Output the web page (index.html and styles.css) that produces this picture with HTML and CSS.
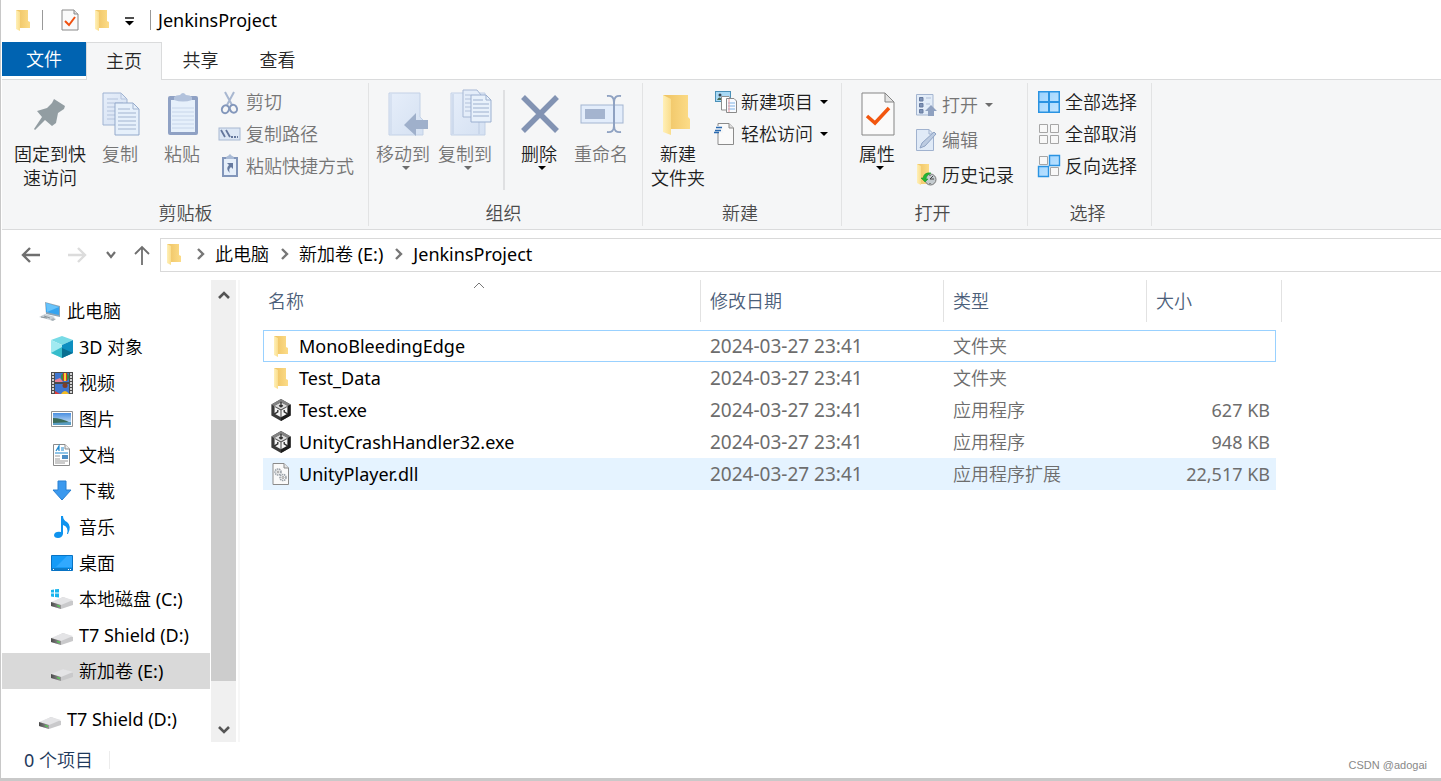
FILE: index.html
```html
<!DOCTYPE html>
<html lang="zh-CN">
<head>
<meta charset="utf-8">
<title>JenkinsProject</title>
<link rel="stylesheet" href="styles.css">
</head>
<body>
<svg class="defs" aria-hidden="true">
  <defs>
    <linearGradient id="gBack" x1="0" x2="1"><stop offset="0" stop-color="#eec262"/><stop offset="1" stop-color="#fcdc88"/></linearGradient>
    <linearGradient id="gFlap" x1="0" x2="1"><stop offset="0" stop-color="#fff0b8"/><stop offset="1" stop-color="#fadd8c"/></linearGradient>
    <linearGradient id="gPage" x1="0" y1="0" x2="1" y2="1"><stop offset="0" stop-color="#e6eefa"/><stop offset="1" stop-color="#d5e1f2"/></linearGradient>
    <linearGradient id="gBlue" x1="0" y1="0" x2="1" y2="1"><stop offset="0" stop-color="#9bd2ff"/><stop offset="1" stop-color="#c4e6ff"/></linearGradient>
    <linearGradient id="gDrive" x1="0" x2="1"><stop offset="0" stop-color="#4a4a4a"/><stop offset="1" stop-color="#9a9a9a"/></linearGradient>
    <linearGradient id="gSky" x1="0" y1="0" x2="0" y2="1"><stop offset="0" stop-color="#4a8fe0"/><stop offset="1" stop-color="#dceefa"/></linearGradient>
    <symbol id="folder" viewBox="0 0 16 22"><path d="M1 1H13V12L15 13V19H4z" fill="url(#gBack)"/><path d="M1 1L5 3V22L1 20z" fill="url(#gFlap)"/></symbol>
    <symbol id="doccheck" viewBox="0 0 18 22"><path d="M1 1H13L17 5V21H1z" fill="#fafafa" stroke="#8a8a8a"/><path d="M13 1V5H17" fill="#ddd" stroke="#8a8a8a"/><path d="M4 12L8 16L14 8" fill="none" stroke="#f0500f" stroke-width="2"/></symbol>
    <symbol id="chev" viewBox="0 0 10 12"><path d="M3 1L8 6L3 11" fill="none" stroke="#777" stroke-width="2.4"/></symbol>
    <symbol id="drive" viewBox="0 0 22 22"><path d="M0 15L12 9L22 13V17L10 21L0 18z" fill="#c9c9cb"/><path d="M0 14L12 9L22 12L10 17z" fill="#e4e4e6"/><path d="M0 14L10 17V21L0 18z" fill="url(#gDrive)"/><path d="M6 17L9 18V19L6 18z" fill="#3fe03f"/></symbol>
    <symbol id="unity" viewBox="0 0 22 24"><path d="M11 0L21.500 6V18L11 24L0.500 18V6z" fill="#3a3a3a"/><path d="M11 0L21.500 6L11 12L0.500 6z" fill="#828282"/><path d="M21.500 6V18L11 24V12z" fill="#1c1c1c"/><path d="M11 4L18 8V16L11 20L4 16V8z" fill="#f4f4f4"/><path d="M11 4L18 8L11 12L4 8z" fill="#dcdcdc"/><path d="M11 12V20M11 12L4.500 8.300M11 12L17.500 8.300" stroke="#555" stroke-width="1.200"/><path d="M11 3V8M9 7L11 8.500L13 7M3.500 16.500L7.500 14V12M18.500 16.500L14.500 14V12" stroke="#333" stroke-width="1.500" fill="none"/></symbol>
  </defs>
</svg>
<div class="window">
  <header class="titlebar">
    <svg class="ic-folder"><use href="#folder"/></svg>
    <span class="vbar"></span>
    <button class="qa" aria-label="属性"><svg width="18" height="22"><use href="#doccheck"/></svg></button>
    <button class="qa" aria-label="新建文件夹"><svg class="ic-folder"><use href="#folder"/></svg></button>
    <button class="qa" aria-label="自定义快速访问工具栏"><svg width="10" height="10"><path d="M0 3H9" stroke="#000" stroke-width="1.400"/><path d="M0 6H9L4.500 10.500z"/></svg></button>
    <span class="vbar"></span>
    <h1>JenkinsProject</h1>
  </header>
  <nav class="tabs">
    <button class="tab file">文件</button><button class="tab active">主页</button><button class="tab">共享</button><button class="tab">查看</button>
  </nav>
  <section class="ribbon">
    <div class="group clip">
      <div class="tools">
        <button class="big wide"><svg viewBox="0 0 44 44"><path d="M26 7L37 14L36 17L30 21L28 31L24 34L17 28L7 38L6 37L14 25L9 19L19 16L24 11z" fill="#929da2"/></svg><span>固定到快<br>速访问</span></button>
        <button class="big off copy"><svg viewBox="0 0 44 44"><path d="M5 1H23L29 7V33H5z" fill="url(#gPage)" stroke="#9fb3d2"/><path d="M23 1V7H29M9 7H20M9 11H25M9 15H17M9 19H17M9 23H17M9 27H17" fill="none" stroke="#b4c3dc"/><path d="M17 11H35L41 17V43H17z" fill="#e6f0fb" stroke="#93a9cb"/><path d="M35 11V17H41M20 17H32M20 21H38M20 25H38M20 29H38M20 33H38M20 37H38" fill="none" stroke="#a2b4d0"/></svg><span>复制</span></button>
        <button class="big off paste"><svg viewBox="0 0 44 44"><rect x="8" y="4" width="30" height="39" rx="2" fill="#8fa1c4"/><path d="M11 8H35V40H11z" fill="#e6f0fb"/><path d="M12 16H34M12 20H34M12 24H34M12 28H34M12 32H34M12 36H34" stroke="#c8d6ea"/><path d="M14 8L14 5Q16 3 20 3Q23 -1 26 3Q30 3 32 5V8Q23 11 14 8z" fill="#b2c2dc"/></svg><span>粘贴</span></button>
        <div class="stack">
          <button class="small off"><svg viewBox="0 0 22 22"><path d="M6 1L13 14M15 1L8 14" stroke="#a8b7d0" stroke-width="2"/><ellipse cx="6.500" cy="18" rx="3.500" ry="4" transform="rotate(25 6 18)" fill="none" stroke="#8397bb" stroke-width="2"/><ellipse cx="14.500" cy="18" rx="3.500" ry="4" transform="rotate(-25 14 18)" fill="none" stroke="#8397bb" stroke-width="2"/></svg>剪切</button>
          <button class="small off"><svg viewBox="0 0 22 22"><rect x="0" y="5" width="21" height="12" fill="#dce7f5" stroke="#a8b8d2"/><path d="M2 7L6 14M7 7L11 14M12 14H14M15 14H17M18 14H19" stroke="#64779c" stroke-width="1.800"/></svg>复制路径</button>
          <button class="small off"><svg viewBox="0 0 22 22"><path d="M4 3H18V21H4z" fill="#e6effa" stroke="#8296ba" stroke-width="2"/><path d="M7 4Q7 1 9 1L11 -1L13 1Q15 1 15 4z" fill="#aabbd6"/><path d="M8 8H14V14L12 12Q9 14 11 18Q6 14 10 10z" fill="#667a9f"/></svg>粘贴快捷方式</button>
        </div>
      </div>
      <div class="caption">剪贴板</div>
    </div>
    <div class="group org">
      <div class="tools">
        <button class="big off"><svg viewBox="0 0 44 44"><path d="M8 1H39V25L42 28V43H8z" fill="url(#gPage)" stroke="#c3d1e6"/><path d="M10 2V42" stroke="#c9d6ea"/><path d="M23 33L35 21V28H47V37H35V44z" fill="#9fb0cb"/></svg><span>移动到</span><i class="arrow"></i></button>
        <button class="big off"><svg viewBox="0 0 44 44"><path d="M8 1H42V43H8z" fill="url(#gPage)" stroke="#c3d1e6"/><path d="M10 2V42M36 25V42" stroke="#bccbe2"/><path d="M20 -2H34L38 3V25H20z" fill="#e4edf9" stroke="#a7b8d4"/><path d="M22 3H28M22 7H28M22 11H28M22 15H28M22 19H28" stroke="#b2c1da"/><path d="M28 3H43L48 8V30H28z" fill="#e8f1fb" stroke="#9bafd0"/><path d="M43 3V8H48M30 8H40M30 12H46M30 16H46M30 20H46M30 24H46" fill="none" stroke="#9db0ce"/></svg><span>复制到</span><i class="arrow"></i></button>
        <span class="sep"></span>
        <button class="big"><svg viewBox="0 0 44 44"><path d="M6 5L40 39M40 5L6 39" stroke="#8293b3" stroke-width="5.500"/></svg><span>删除</span><i class="arrow"></i></button>
        <button class="big off"><svg viewBox="0 0 44 44"><rect x="2" y="13" width="42" height="18" fill="#e3edfb" stroke="#a4b5d1"/><path d="M6 17H26V27H6z" fill="#a4b4cf"/><path d="M28 4Q35 3 35 10Q35 3 42 4M35 8V36M28 40Q35 41 35 34Q35 41 42 40" fill="none" stroke="#8fa2c2" stroke-width="2"/></svg><span>重命名</span></button>
      </div>
      <div class="caption">组织</div>
    </div>
    <div class="group mid">
      <div class="tools">
        <button class="big"><svg viewBox="0 0 44 44"><path d="M7 3H32V25L34 27V37H14z" fill="url(#gBack)"/><path d="M7 3L15 7V43L7 40z" fill="url(#gFlap)"/></svg><span>新建<br>文件夹</span></button>
        <div class="stack s6">
          <button class="small"><svg viewBox="0 0 22 22"><rect x="0.500" y="0.500" width="15" height="10" fill="#a9d9f4" stroke="#4a90b8"/><circle cx="5" cy="4" r="1.500" fill="#345"/><path d="M2 9Q4 4 8 9z" fill="#466b55"/><path d="M6.500 5.500H14L16 8V19H6.500z" fill="#fff" stroke="#8f8f8f"/><path d="M11.500 7.500H19L21.500 10V21.500H11.500z" fill="#f8fbff" stroke="#8a8a8a"/><path d="M13 12H20M13 15H20M13 18H20" stroke="#7fb2e5"/><path d="M14 8V21" stroke="#e99"/></svg>新建项目<i class="arrow"></i></button>
          <button class="small"><svg viewBox="0 0 22 22"><path d="M3 0.500H14L18.500 5V21.500H3z" fill="#fafafa" stroke="#8b8b8b"/><path d="M14 0.500V5H18.500" fill="#ddd" stroke="#8b8b8b"/><path d="M2 3H8V10H-1z" fill="#f5f6f7"/><path d="M1 4.500H7M0 7.500H6M-1 9.500H4" stroke="#2a6ab0" stroke-width="1.400"/></svg>轻松访问<i class="arrow"></i></button>
        </div>
      </div>
      <div class="caption">新建</div>
    </div>
    <div class="group mid">
      <div class="tools">
        <button class="big"><svg viewBox="0 0 44 44"><path d="M7 1H30L39 10V43H7z" fill="#fafafa" stroke="#858585"/><path d="M30 1V10H39z" fill="#e4e4e4" stroke="#858585"/><path d="M12 24L20 31L34 16" fill="none" stroke="#f2560f" stroke-width="3.500"/></svg><span>属性</span><i class="arrow"></i></button>
        <div class="stack loose">
          <button class="small off"><svg viewBox="0 0 22 22"><path d="M0.500 0.500H17V21H0.500z" fill="#e2ecf8" stroke="#a4b5d0"/><path d="M3.500 3.500H7V7H3.500zM3.500 9.500H7V13H3.500zM3.500 15.500H7V19H3.500z" fill="#7e92b6" stroke="#667a9f"/><path d="M10 4H15M10 10H14" stroke="#b0bfd8"/><path d="M9 17L15 11L21 17H18V22H12V17z" fill="#8fa1c0"/></svg>打开<i class="arrow"></i></button>
          <button class="small off"><svg viewBox="0 0 22 22"><path d="M0.500 0.500H13L17.500 5V21.500H0.500z" fill="#e0eaf7" stroke="#a0b2cf"/><path d="M13 0.500V5H17" fill="none" stroke="#a0b2cf"/><path d="M4 19L6 14L18 3L20 5L9 17z" fill="#bccbe1" stroke="#8fa3c4"/></svg>编辑</button>
          <button class="small"><svg viewBox="0 0 22 22"><path d="M1 0H13V20H4z" fill="url(#gBack)"/><path d="M1 0L5 2V21L1 19z" fill="url(#gFlap)"/><circle cx="14.500" cy="15.500" r="5.500" fill="#c4cbcf" stroke="#777"/><path d="M14 15L17 12M14 15H18M14 11V12M14 19V20" stroke="#444"/><path d="M5 14L9 18L12 15H10Q10 11 15 9Q8 8 7 14z" fill="#22b535" stroke="#149022" stroke-width=".5"/></svg>历史记录</button>
        </div>
      </div>
      <div class="caption">打开</div>
    </div>
    <div class="group sel">
      <div class="tools">
        <div class="stack">
          <button class="small"><svg viewBox="0 0 22 22"><path d="M0.750 0.750H21.250V21.250H0.750z" fill="url(#gBlue)" stroke="#2a93e2" stroke-width="1.500"/><path d="M11 1V21M1 11H21" stroke="#2a93e2" stroke-width="2"/></svg>全部选择</button>
          <button class="small"><svg viewBox="0 0 22 22"><path d="M1.500 1.500H9.500V9.500H1.500zM12.500 1.500H20.500V9.500H12.500zM1.500 12.500H9.500V20.500H1.500zM12.500 12.500H20.500V20.500H12.500z" fill="#f8f8f8" stroke="#a6a6a6"/></svg>全部取消</button>
          <button class="small"><svg viewBox="0 0 22 22"><path d="M1.500 1.500H9.500V9.500H1.500zM12.500 12.500H20.500V20.500H12.500z" fill="#f8f8f8" stroke="#a6a6a6"/><path d="M11.500 0.500H21.500V10.500H11.500zM0.500 11.500H10.500V21.500H0.500z" fill="url(#gBlue)" stroke="#2a93e2" stroke-width="1.400"/></svg>反向选择</button>
        </div>
      </div>
      <div class="caption">选择</div>
    </div>
  </section>
  <div class="address">
    <button class="nav" aria-label="后退"><svg width="20" height="18"><path d="M19 9H2M9 2L2 9L9 16" fill="none" stroke="#6f6f6f" stroke-width="2.400"/></svg></button>
    <button class="nav fwd" aria-label="前进"><svg width="20" height="18"><path d="M1 9H18M11 2L18 9L11 16" fill="none" stroke="#dcdcdc" stroke-width="2.400"/></svg></button>
    <button class="nav" aria-label="最近"><svg width="10" height="8"><path d="M1 1L5 6L9 1" fill="none" stroke="#6f6f6f" stroke-width="2.200"/></svg></button>
    <button class="nav up" aria-label="向上"><svg width="18" height="20"><path d="M9 20V2M2 9L9 2L16 9" fill="none" stroke="#6f6f6f" stroke-width="1.800"/></svg></button>
    <div class="crumbs">
      <svg class="ic-folder"><use href="#folder"/></svg>
      <svg class="chev"><use href="#chev"/></svg><a href="#">此电脑</a>
      <svg class="chev"><use href="#chev"/></svg><a href="#">新加卷 (E:)</a>
      <svg class="chev"><use href="#chev"/></svg><a href="#">JenkinsProject</a>
    </div>
  </div>
  <main class="body">
    <aside class="side">
      <ul class="tree">
        <li class="root"><svg viewBox="0 0 22 22"><path d="M6 2L21 6V17L7 14z" fill="#8fa5b5"/><path d="M7 3L20 7V15L7 12z" fill="#35a4f0"/><path d="M7 3L20 7L8 12z" fill="#68c3fa"/><path d="M0 17L6 14L16 17L11 20z" fill="#c8d0d6"/><path d="M2 17L8 18M5 16L11 18" stroke="#8c969c"/><path d="M11 20L14 18L17 19L14 21z" fill="#a5afb5"/></svg>此电脑</li>
        <li><svg viewBox="0 0 22 22"><path d="M11 0L22 4L11 9L0 4z" fill="#78dbe6"/><path d="M0 4L11 9V22L0 17z" fill="#a1eaf1"/><path d="M11 9L22 4V17L11 22z" fill="#0d8fc0"/><path d="M0 17L11 11V22z" fill="#36bccb"/><path d="M11 12L22 17L11 22z" fill="#086f91"/></svg>3D 对象</li>
        <li><svg viewBox="0 0 22 22"><path d="M0 0H22V22H0z" fill="#4b4b4b"/><path d="M1 2H3M1 5H3M1 8H3M1 11H3M1 14H3M1 17H3M1 20H3M19 2H21M19 5H21M19 8H21M19 11H21M19 14H21M19 17H21M19 20H21" stroke="#fff" stroke-width="1.600"/><path d="M4 1H18V10H4zM4 12H18V22H4z" fill="#3f76cf"/><ellipse cx="14" cy="5" rx="4" ry="4" fill="#3d8a3a"/><path d="M12 1H16V9H12z" fill="#d5342b"/><path d="M13 1H15V9H13z" fill="#f5d43a"/><path d="M4 8L9 6L12 10H4z" fill="#e77f96"/><circle cx="14" cy="13.500" r="2.500" fill="#7f3d26"/><path d="M4 19L9 22H4z" fill="#de3a38"/><path d="M10 22Q14 16 18 22z" fill="#f3bb23"/></svg>视频</li>
        <li><svg viewBox="0 0 22 22"><path d="M0.500 3.500H21.500V18.500H0.500z" fill="#fff" stroke="#929292"/><path d="M2 5H20V17H2z" fill="url(#gSky)"/><path d="M2 10Q10 10 20 15H2z" fill="#3b6c5a"/><path d="M2 15L20 14V17H2z" fill="#5b9ec4"/></svg>图片</li>
        <li><svg viewBox="0 0 22 22"><path d="M2.500 0.500H14L18.500 5V21.500H2.500z" fill="#fff" stroke="#8b8b8b"/><path d="M14 0.500V5H18.500" fill="#eee" stroke="#8b8b8b"/><path d="M5 7L8 2V7M6 5H8M10 4H13M10 6H13M4 9H17" fill="none" stroke="#2189cf" stroke-width="1.200"/><path d="M4 12H9M4 15H9M4 17H17M4 19H14" stroke="#999"/><path d="M11 11H17V15H11z" fill="#4d8ec5"/></svg>文档</li>
        <li><svg viewBox="0 0 22 22"><path d="M7 1H15V10H20L11 20L2 10H7z" fill="#3b99ee" stroke="#2980d2"/></svg>下载</li>
        <li><svg viewBox="0 0 22 22"><path d="M10 0H12Q12 4 16 6Q21 10 17 18H16Q18 11 12 9V18Q11 22 7 22Q3 22 3 19Q4 15 10 16z" fill="#0f93ee"/></svg>音乐</li>
        <li><svg viewBox="0 0 22 22"><path d="M0.500 3.500H21.500V18.500H0.500z" fill="#159bf7" stroke="#0873c4"/><path d="M16 4H21V15H5z" fill="#31a9ff"/><path d="M1 17H21" stroke="#075c9e"/><path d="M2 17.500H3M17 17.500H18M19 17.500H20" stroke="#fff"/></svg>桌面</li>
        <li><svg viewBox="0 0 22 22"><use href="#drive"/><path d="M0 2L3 1.500V4.500H0zM4 1.300L8 1V4.500H4zM0 5.500H3V9L0 8.500zM4 5.500H8V9.500L4 9z" fill="#19b5ee"/></svg>本地磁盘 (C:)</li>
        <li><svg viewBox="0 0 22 22"><use href="#drive"/></svg>T7 Shield (D:)</li>
        <li class="current"><svg viewBox="0 0 22 22"><use href="#drive"/></svg>新加卷 (E:)</li>
        <li class="root gap"><svg viewBox="0 0 22 22"><use href="#drive"/></svg>T7 Shield (D:)</li>
      </ul>
      <div class="scroll">
        <button aria-label="向上滚动"><svg width="14" height="10"><path d="M2 9L7 4L12 9" fill="none" stroke="#555" stroke-width="2.600"/></svg></button>
        <div class="track"><div class="thumb"></div></div>
        <button aria-label="向下滚动"><svg width="14" height="10"><path d="M2 4L7 9L12 4" fill="none" stroke="#555" stroke-width="2.600"/></svg></button>
      </div>
    </aside>
    <section class="files">
      <table>
        <thead><tr>
          <th class="name">名称<svg class="sort" width="12" height="7"><path d="M1 6L6 1L11 6" fill="none" stroke="#777"/></svg></th><th class="date">修改日期</th><th class="type">类型</th><th class="size">大小</th>
        </tr></thead>
        <tbody>
          <tr class="focus"><td><div><svg class="ic-folder"><use href="#folder"/></svg>MonoBleedingEdge</div></td><td class="num">2024-03-27 23:41</td><td>文件夹</td><td></td></tr>
          <tr><td><div><svg class="ic-folder"><use href="#folder"/></svg>Test_Data</div></td><td class="num">2024-03-27 23:41</td><td>文件夹</td><td></td></tr>
          <tr><td><div><svg><use href="#unity"/></svg>Test.exe</div></td><td class="num">2024-03-27 23:41</td><td>应用程序</td><td>627 KB</td></tr>
          <tr><td><div><svg><use href="#unity"/></svg>UnityCrashHandler32.exe</div></td><td class="num">2024-03-27 23:41</td><td>应用程序</td><td>948 KB</td></tr>
          <tr class="hover"><td><div><svg viewBox="0 0 22 22"><path d="M3 0.500H14L18.500 5V21.500H3z" fill="#fafafa" stroke="#8b8b8b"/><path d="M14 0.500V5H18.500" fill="#e5e5e5" stroke="#8b8b8b"/><circle cx="8" cy="9" r="3" fill="none" stroke="#9ba2a9" stroke-width="1.600" stroke-dasharray="1.500 .6"/><circle cx="8" cy="9" r="1" fill="none" stroke="#999"/><circle cx="13" cy="14.500" r="3" fill="none" stroke="#9ba2a9" stroke-width="1.600" stroke-dasharray="1.500 .6"/><circle cx="13" cy="14.500" r="1" fill="none" stroke="#999"/></svg>UnityPlayer.dll</div></td><td class="num">2024-03-27 23:41</td><td>应用程序扩展</td><td>22,517 KB</td></tr>
        </tbody>
      </table>
    </section>
  </main>
  <footer class="status"><span class="count">0 个项目</span><span class="mark">CSDN @adogai</span></footer>
</div>
</body>
</html>
```
FILE: styles.css
```css
* { box-sizing: border-box; }
body {
  margin: 0;
  background: #c9c9c9;
  color: #000;
  font: 400 18px/24px "Noto Sans", "Noto Sans CJK SC DemiLight", "Noto Sans CJK SC", sans-serif;
}
button {
  margin: 0;
  padding: 0;
  border: 0;
  background: none;
  color: inherit;
  font: inherit;
}
a { color: inherit; text-decoration: none; }
svg { display: block; flex: none; overflow: visible; }
.defs { position: absolute; width: 0; height: 0; }
.window {
  display: flex;
  flex-direction: column;
  min-height: calc(100vh - 3px);
  margin-bottom: 3px;
  padding-left: 1px;
  border-left: 1px solid #c8c8c8;
  background: #fff;
}
.ic-folder { width: 16px; height: 22px; }

.titlebar {
  display: flex;
  align-items: center;
  height: 42px;
  padding-bottom: 2px;
  padding-left: 13px;
}
.titlebar h1 { margin: 0 0 0 7px; font-size: 18px; font-weight: 400; line-height: 24px; }
.vbar { width: 1px; height: 20px; margin-left: 11px; background: #999; }
.qa { margin-left: 15px; }
.vbar + .qa { margin-left: 18px; }
.qa + .vbar { margin-left: 15px; }

.tabs { display: flex; height: 38px; border-bottom: 1px solid #dadbdc; }
.tab { width: 77px; height: 37px; padding-bottom: 2px; color: #262626; }
.tab.file { width: 84px; height: 34px; padding-bottom: 0; background: #0063b1; color: #fff; }
.tab.active {
  width: 76px;
  height: 38px;
  border: 1px solid #dadbdc;
  border-bottom: 0;
  background: #f5f6f7;
}

.ribbon {
  display: flex;
  height: 150px;
  border-bottom: 1px solid #dadbdc;
  background: #f5f6f7;
}
.group {
  position: relative;
  display: flex;
  flex-direction: column;
  justify-content: space-between;
  padding-bottom: 4px;
}
.group::after {
  content: "";
  position: absolute;
  top: 3px;
  right: 0;
  bottom: 3px;
  width: 1px;
  background: #e2e3e4;
}
.clip .tools { padding-right: 15px; padding-left: 8px; }
.org .tools { padding-right: 11px; padding-left: 3px; }
.mid .tools { padding-right: 14px; padding-left: 4px; }
.sel .tools { padding-right: 15px; padding-left: 10px; }
.tools { display: flex; align-items: flex-start; }
.caption { padding-right: 5px; color: #4a4a4a; text-align: center; }
.clip .caption { padding-right: 0; }
.big {
  display: flex;
  flex-direction: column;
  align-items: center;
  width: 62px;
  padding-top: 12px;
  color: #1e1e1e;
  white-space: nowrap;
}
.big svg { width: 44px; height: 44px; margin-bottom: 6px; }
.big.wide { width: 80px; }
.big.copy { width: 60px; }
.big.paste { width: 64px; }
.arrow {
  border-top: 4px solid #000;
  border-right: 4px solid transparent;
  border-left: 4px solid transparent;
}
.big .arrow { margin-left: 6px; }
.small .arrow { margin-left: 3px; }
.sep { width: 2px; height: 100px; margin: 10px 3px 0 7px; background: #dfe0e2; }
.stack {
  display: flex;
  flex-direction: column;
  gap: 8px;
  align-items: flex-start;
  padding-top: 10px;
}
.clip .stack { padding-left: 5px; }
.stack.s6 { padding-left: 6px; }
.stack.loose { gap: 11px; padding-top: 13px; padding-left: 8px; }
.small {
  display: flex;
  align-items: center;
  gap: 4px;
  color: #1e1e1e;
}
.clip .small, .sel .small { gap: 5px; }
.small svg { width: 22px; height: 22px; }
.big.off, .small.off { color: #757575; }
.off .arrow { border-top-color: #6d6d6d; }

.address { display: flex; align-items: center; padding: 8px 0; }
.nav { margin-left: 19px; }
.nav.fwd { margin-left: 26px; }
.nav.up { margin: 0 9px 0 17px; }
.crumbs {
  display: flex;
  flex: 1;
  align-items: center;
  height: 34px;
  padding-bottom: 2px;
  padding-left: 5px;
  border: 1px solid #d9d9d9;
  border-right: 0;
}
.chev { width: 10px; height: 12px; margin: 0 10px 0 13px; }
a + .chev { margin-left: 10px; }

.body { display: flex; flex: 1; }
.side { display: flex; width: 238px; border-right: 2px solid #f7f7f7; }
.tree {
  flex: 1;
  margin: 0;
  padding: 13px 0 0;
  list-style: none;
}
.tree li {
  display: flex;
  gap: 6px;
  align-items: center;
  height: 36px;
  padding-left: 49px;
}
.tree .root { padding-left: 37px; }
.tree .gap { margin-top: 12px; }
.tree .current { background: #d9d9d9; }
.tree svg { width: 22px; height: 22px; }
.scroll {
  display: flex;
  flex-direction: column;
  width: 25px;
  margin: 0 2px 0 1px;
  background: #f0f0f0;
}
.scroll button { display: grid; flex: 0 0 28px; place-items: center; }
.track { flex: 1; padding-top: 112px; }
.thumb { height: 261px; background: #cdcdcd; }

.files { flex: 1; padding-left: 23px; }
table {
  width: 1013px;
  border-collapse: collapse;
  table-layout: fixed;
  color: #6d6d6d;
}
.name { width: 438px; }
.date { width: 243px; }
.type { width: 203px; }
th {
  position: relative;
  height: 50px;
  padding: 0 0 8px 9px;
  color: #4c607a;
  font-weight: 400;
  text-align: left;
}
th.name { padding-left: 5px; }
th::after {
  content: "";
  position: absolute;
  top: 0;
  right: 0;
  width: 1px;
  height: 42px;
  background: #e2e2e2;
}
th.size::after { right: -6px; }
.sort { position: absolute; top: 2px; left: 210px; }
td { height: 32px; padding: 0 6px 0 9px; }
td:first-child { padding-left: 7px; color: #000; }
td:last-child { text-align: right; }
td.num { font-size: 19px; }
td div { display: flex; gap: 7px; align-items: center; }
td svg, td .ic-folder { width: 22px; height: 22px; }
.focus { outline: 1px solid #99d1ff; outline-offset: -1px; }
.hover { background: #e5f3ff; }

.status {
  display: flex;
  align-items: center;
  justify-content: space-between;
  height: 36px;
  padding: 0 14px 0 22px;
}
.count { padding-right: 16px; border-right: 1px solid #ececec; color: #1e395b; line-height: 18px; }
.mark { padding-top: 10px; color: #888; font: 11px/16px "Liberation Sans", Arial, sans-serif; }
```
